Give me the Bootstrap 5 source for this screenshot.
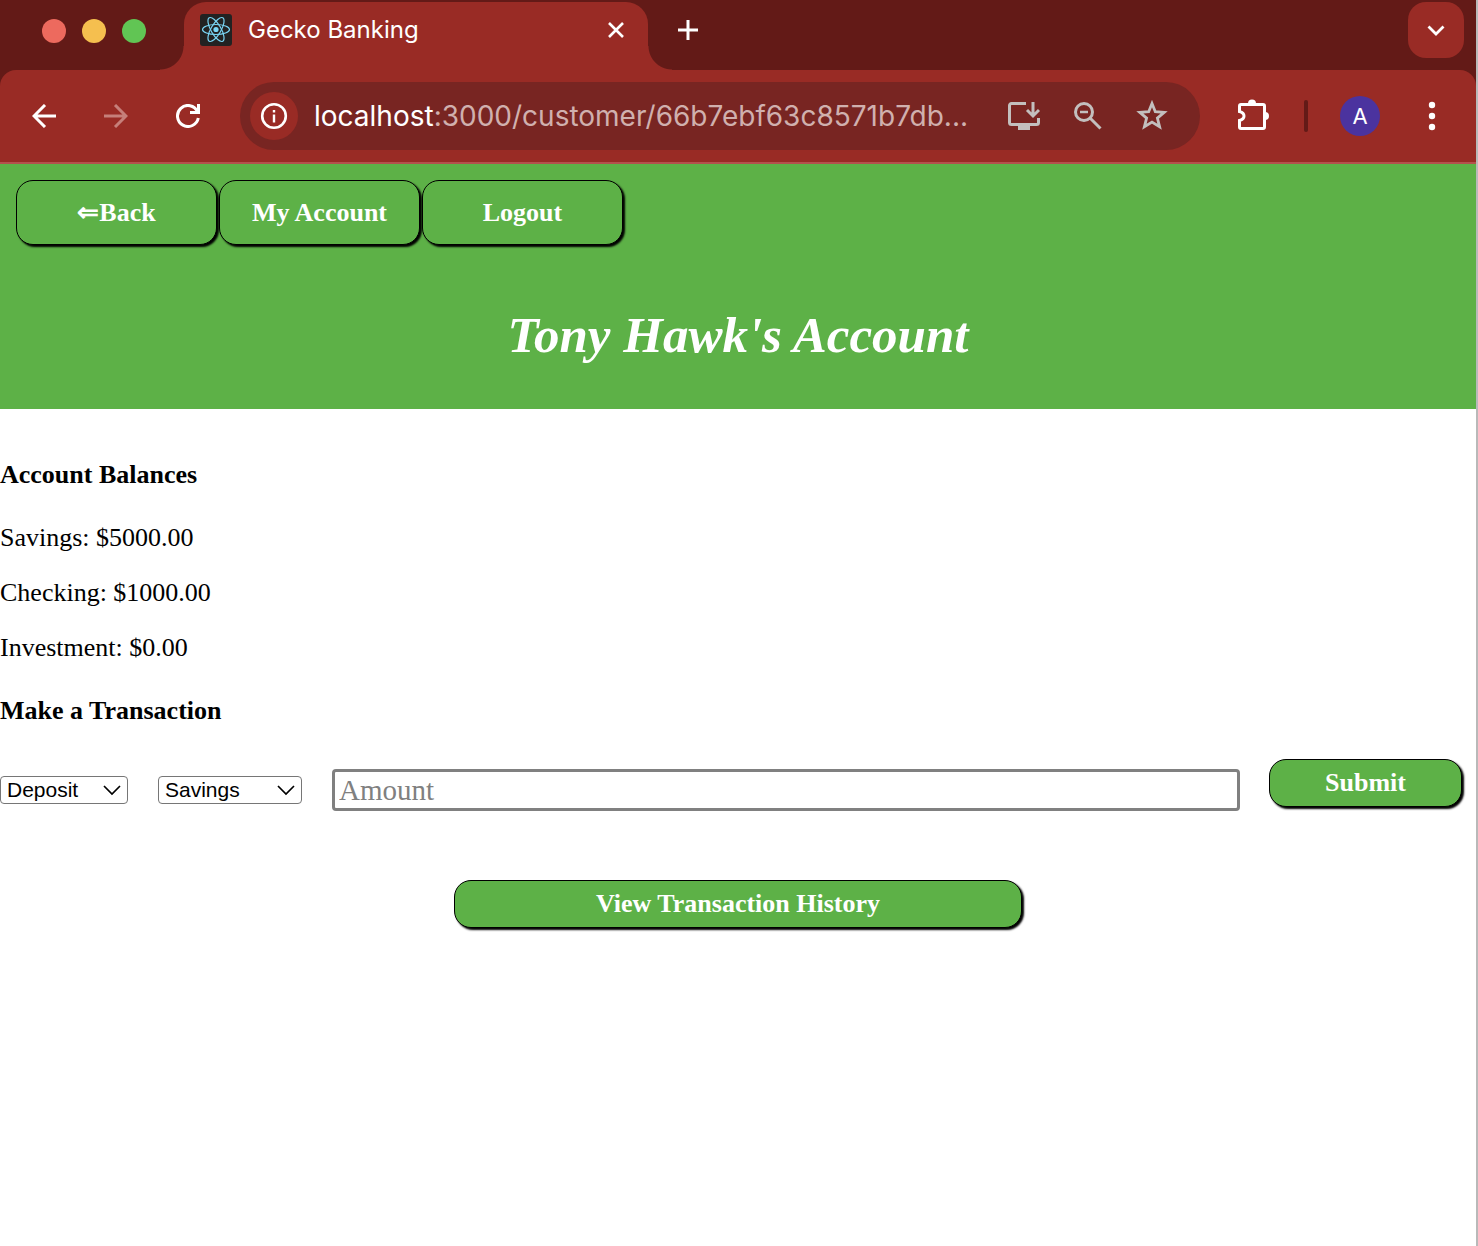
<!DOCTYPE html>
<html lang="en">
<head>
<meta charset="utf-8">
<meta name="viewport" content="width=device-width, initial-scale=1">
<title>Gecko Banking</title>
<link href="https://cdn.jsdelivr.net/npm/bootstrap@5.3.0/dist/css/bootstrap.min.css" rel="stylesheet">
<style>
  :root { --frame: #631a17; --bar: #992b25; --omni: #782522; --gecko: #5db147; }
  body { font-family: "Liberation Serif", serif; font-size: 26px; line-height: 30px; color: #000; background: #fff; }
  .window-shell { border-right: 2px solid #b9b9b9; }
  .browser-ui { font-family: Inter, "Open Sans", sans-serif; color: #fff; background: var(--frame); }
  .browser-ui button { border: 0; background: none; padding: 0; color: inherit; display: flex; align-items: center; justify-content: center; }
  .browser-ui svg { display: block; flex: none; }

  /* tab strip */
  .tab-strip { height: 70px; padding: 2px 12px 0 42px; }
  .lights { gap: 16px; margin-top: 17px; }
  .browser-ui .light { width: 24px; height: 24px; border-radius: 50%; }
  .browser-ui .light-close { background: #ed6a5e; }
  .browser-ui .light-min { background: #f5bf4f; }
  .browser-ui .light-max { background: #61c554; }
  .page-tab { position: relative; width: 464px; height: 68px; margin-left: 38px; padding: 0 20px 12px 16px; background: var(--bar); border-radius: 22px 22px 0 0; font-size: 24px; line-height: 30px; }
  .page-tab::before, .page-tab::after { content: ""; position: absolute; bottom: 0; width: 24px; height: 24px; }
  .page-tab::before { right: 100%; background: radial-gradient(circle at 0 0, transparent 23px, var(--bar) 24px); }
  .page-tab::after { left: 100%; background: radial-gradient(circle at 100% 0, transparent 23px, var(--bar) 24px); }
  .tab-title { margin-left: 16px; }
  .new-tab { width: 40px; height: 56px; margin-left: 20px; }
  .browser-ui .tab-search { width: 56px; height: 56px; border-radius: 18px; background: var(--bar); }

  /* toolbar */
  .tool-row { height: 94px; padding: 0 24px; background: var(--bar); border-bottom: 2px solid #b3524d; border-radius: 16px 16px 0 0; }
  .browser-ui .tool { width: 40px; height: 40px; margin-right: 32px; }
  .browser-ui .tool-dim { color: #c67f7a; }
  .address { height: 68px; padding: 0 32px 0 10px; background: var(--omni); border-radius: 34px; min-width: 0; }
  .browser-ui .site-info { width: 48px; height: 48px; border-radius: 50%; background: var(--bar); flex: none; }
  .url-text { margin-left: 16px; font-size: 28px; line-height: 36px; color: #d0b0ae; white-space: nowrap; overflow: hidden; }
  .url-text span { color: #fff; }
  .browser-ui .address-tool { color: #c3bfbe; width: 32px; height: 32px; }
  .address-tools { gap: 32px; margin-left: auto; flex: none; }
  .puzzle { margin-left: 36px; flex: none; }
  .divider-bar { width: 4px; height: 32px; border-radius: 2px; margin: 0 32px 0 34px; background: var(--frame); flex: none; }
  .browser-ui .profile { width: 40px; height: 40px; border-radius: 50%; background: #4b339f; font-size: 22px; line-height: 24px; flex: none; }
  .browser-ui .menu-dots { width: 40px; height: 40px; margin-left: 32px; flex: none; }

  /* banking page */
  .bank-header { background: var(--gecko); min-height: 245px; padding: 16px; }
  .bank-btn, .bank-btn:hover { display: flex; align-items: center; justify-content: center; color: #fff; background: var(--gecko); font-weight: 700; font-size: 26px; line-height: 30px; border: 1px solid #000; border-radius: 17px; box-shadow: 2px 2px 2px #000; padding: 0; text-decoration: none; height: 48px; }
  .bank-nav { gap: 2px; }
  .bank-nav .bank-btn { width: 201px; height: 65px; }
  .account-title { font-size: 51px; line-height: 60px; font-weight: 700; font-style: italic; color: #fff; margin: 60px 0 0; }
  .section-title { font-size: 26px; line-height: 30px; font-weight: 700; margin: 0; }
  .balances { padding-top: 51px; }
  .balance-list { margin: 33px 0; gap: 25px; }
  .trade-form { margin-top: 33px; gap: 29px; padding-right: 14px; }
  .trade-fields { gap: 30px; height: 42px; margin-top: 10px; }
  .pick { appearance: none; height: 28px; padding: 0 6px; font-family: "Liberation Sans", sans-serif; font-size: 21px; line-height: 26px; color: #000; border: 1px solid #767676; border-radius: 4px; background: #fff url("data:image/svg+xml,%3Csvg xmlns='http://www.w3.org/2000/svg' viewBox='0 0 18 12'%3E%3Cpath d='M1 2l8 8 8-8' fill='none' stroke='%23000' stroke-width='1.700'/%3E%3C/svg%3E") no-repeat right 6px center / 18px 12px; }
  .pick-kind { width: 128px; }
  .pick-account { width: 144px; }
  .amount { height: 42px; min-width: 0; padding: 0 4px; font-size: 29px; line-height: 36px; border: 3px solid #808080; border-radius: 4px; }
  .amount::placeholder { color: #808080; opacity: 1; }
  .submit-btn { width: 193px; flex: none; }
  .history-row { margin-top: 69px; }
  .history-btn { width: 38.5%; }
</style>
<script src="https://cdn.jsdelivr.net/npm/bootstrap@5.3.0/dist/js/bootstrap.bundle.min.js"></script>
</head>
<body>
<div class="window-shell min-vh-100">
  <header class="browser-ui">
    <div class="tab-strip d-flex align-items-start">
      <div class="lights d-flex">
        <button class="light light-close" aria-label="Close window"></button>
        <button class="light light-min" aria-label="Minimize window"></button>
        <button class="light light-max" aria-label="Zoom window"></button>
      </div>
      <div class="page-tab d-flex align-items-center">
        <svg width="32" height="32" viewBox="0 0 32 32">
          <rect width="32" height="32" rx="3" fill="#222"/>
          <g fill="none" stroke="#7ad6f5" stroke-width="1.2">
            <ellipse cx="16" cy="15.5" rx="13.5" ry="5"/>
            <ellipse cx="16" cy="15.5" rx="13.5" ry="5" transform="rotate(60 16 15.5)"/>
            <ellipse cx="16" cy="15.5" rx="13.5" ry="5" transform="rotate(120 16 15.5)"/>
          </g>
          <circle cx="16" cy="15.5" r="2.6" fill="#7ad6f5"/>
        </svg>
        <span class="tab-title">Gecko Banking</span>
        <button class="ms-auto" aria-label="Close tab"><svg width="24" height="24" viewBox="0 0 24 24"><path d="M5 5l14 14M19 5L5 19" stroke="#fff" stroke-width="2.6"/></svg></button>
      </div>
      <button class="new-tab" aria-label="New tab"><svg width="24" height="24" viewBox="0 0 24 24"><path d="M12 2v20M2 12h20" stroke="#fff" stroke-width="3"/></svg></button>
      <button class="tab-search ms-auto" aria-label="Search tabs"><svg width="24" height="24" viewBox="0 0 24 24"><path d="M4.500 8.500l7.500 7.500 7.500-7.500" fill="none" stroke="#fff" stroke-width="2.800"/></svg></button>
    </div>
    <div class="tool-row d-flex align-items-center">
      <button class="tool" aria-label="Back"><svg width="24" height="24" viewBox="0 0 24 24" fill="none" stroke="currentColor" stroke-width="3"><path d="M24 12H2M13 1L2 12l11 11"/></svg></button>
      <button class="tool tool-dim" aria-label="Forward"><svg width="24" height="24" viewBox="0 0 24 24" fill="none" stroke="currentColor" stroke-width="3"><path d="M0 12h22M11 1l11 11-11 11"/></svg></button>
      <button class="tool" aria-label="Reload"><svg width="24" height="24" viewBox="0 0 24 24"><path d="M22.300 14A10.500 10.500 0 1 1 21.500 7.500" fill="none" stroke="#fff" stroke-width="3"/><path d="M24 0v10H14V7h7V0z" fill="#fff"/></svg></button>
      <div class="address d-flex align-items-center flex-grow-1">
        <button class="site-info" aria-label="Site information"><svg width="28" height="28" viewBox="0 0 28 28"><circle cx="14" cy="14" r="11.800" fill="none" stroke="#fff" stroke-width="2.600"/><path d="M14 12.500v8M14 8v2.600" stroke="#fff" stroke-width="2.400"/></svg></button>
        <div class="url-text"><span>localhost</span>:3000/customer/66b7ebf63c8571b7db...</div>
        <div class="address-tools d-flex">
          <button class="address-tool" aria-label="Install app"><svg width="32" height="32" viewBox="0 0 32 32" fill="none" stroke="currentColor" stroke-width="3"><path d="M18 3.500H3.500a2 2 0 0 0-2 2v17a2 2 0 0 0 2 2h25a2 2 0 0 0 2-2V18"/><path d="M25 2v13M19 10l6 6 6-6"/><path d="M10 26h12v4H10z" fill="currentColor" stroke="none"/></svg></button>
          <button class="address-tool" aria-label="Zoom"><svg width="32" height="32" viewBox="0 0 32 32" fill="none" stroke="currentColor" stroke-width="3"><circle cx="12" cy="12" r="8.500"/><path d="M18 18l10.500 10.500"/><path d="M8 12h8" stroke-width="2.500"/></svg></button>
          <button class="address-tool" aria-label="Bookmark"><svg width="32" height="32" viewBox="0 0 32 32" fill="none" stroke="currentColor" stroke-width="2.800"><path d="M16 3.500l3.300 8.200 8.900.7-6.800 5.700 2.200 8.700-7.600-4.700-7.600 4.700 2.200-8.700-6.800-5.700 8.900-.7z"/></svg></button>
        </div>
      </div>
      <button class="puzzle" aria-label="Extensions"><svg width="34" height="38" viewBox="0 0 34 38"><path d="M5 7.500h22a1.500 1.500 0 0 1 1.500 1.500v21a1.500 1.500 0 0 1-1.500 1.500H5A1.500 1.500 0 0 1 3.500 30v-6.500c6-1.500 6-7.500 0-9V9A1.500 1.500 0 0 1 5 7.500z" fill="none" stroke="#fff" stroke-width="3"/><path d="M12 6.500a4 4 0 0 1 8 0zM29 15a4 4 0 0 1 0 8z" fill="#fff"/></svg></button>
      <div class="divider-bar"></div>
      <button class="profile" aria-label="Profile A">A</button>
      <button class="menu-dots" aria-label="Menu"><svg width="8" height="32" viewBox="0 0 8 32" fill="#fff"><circle cx="4" cy="5" r="3.200"/><circle cx="4" cy="16" r="3.200"/><circle cx="4" cy="27" r="3.200"/></svg></button>
    </div>
  </header>

  <div class="bank-header">
    <nav class="bank-nav d-flex">
      <a class="bank-btn" href="#back">⇐Back</a>
      <a class="bank-btn" href="#account">My Account</a>
      <a class="bank-btn" href="#logout">Logout</a>
    </nav>
    <h1 class="account-title text-center">Tony Hawk's Account</h1>
  </div>

  <main>
    <section class="balances">
      <h2 class="section-title">Account Balances</h2>
      <div class="balance-list d-flex flex-column">
        <div>Savings: $5000.00</div>
        <div>Checking: $1000.00</div>
        <div>Investment: $0.00</div>
      </div>
    </section>
    <section>
      <h2 class="section-title">Make a Transaction</h2>
      <form class="trade-form d-flex align-items-start" onsubmit="return false">
        <div class="trade-fields d-flex align-items-center flex-grow-1">
          <select class="pick pick-kind" aria-label="Transaction type"><option>Deposit</option><option>Withdraw</option></select>
          <select class="pick pick-account" aria-label="Account"><option>Savings</option><option>Checking</option><option>Investment</option></select>
          <input class="amount flex-grow-1" type="text" placeholder="Amount" aria-label="Amount">
        </div>
        <button class="bank-btn submit-btn" type="submit">Submit</button>
      </form>
      <div class="history-row d-flex justify-content-center">
        <button class="bank-btn history-btn" type="button">View Transaction History</button>
      </div>
    </section>
  </main>
</div>
</body>
</html>
